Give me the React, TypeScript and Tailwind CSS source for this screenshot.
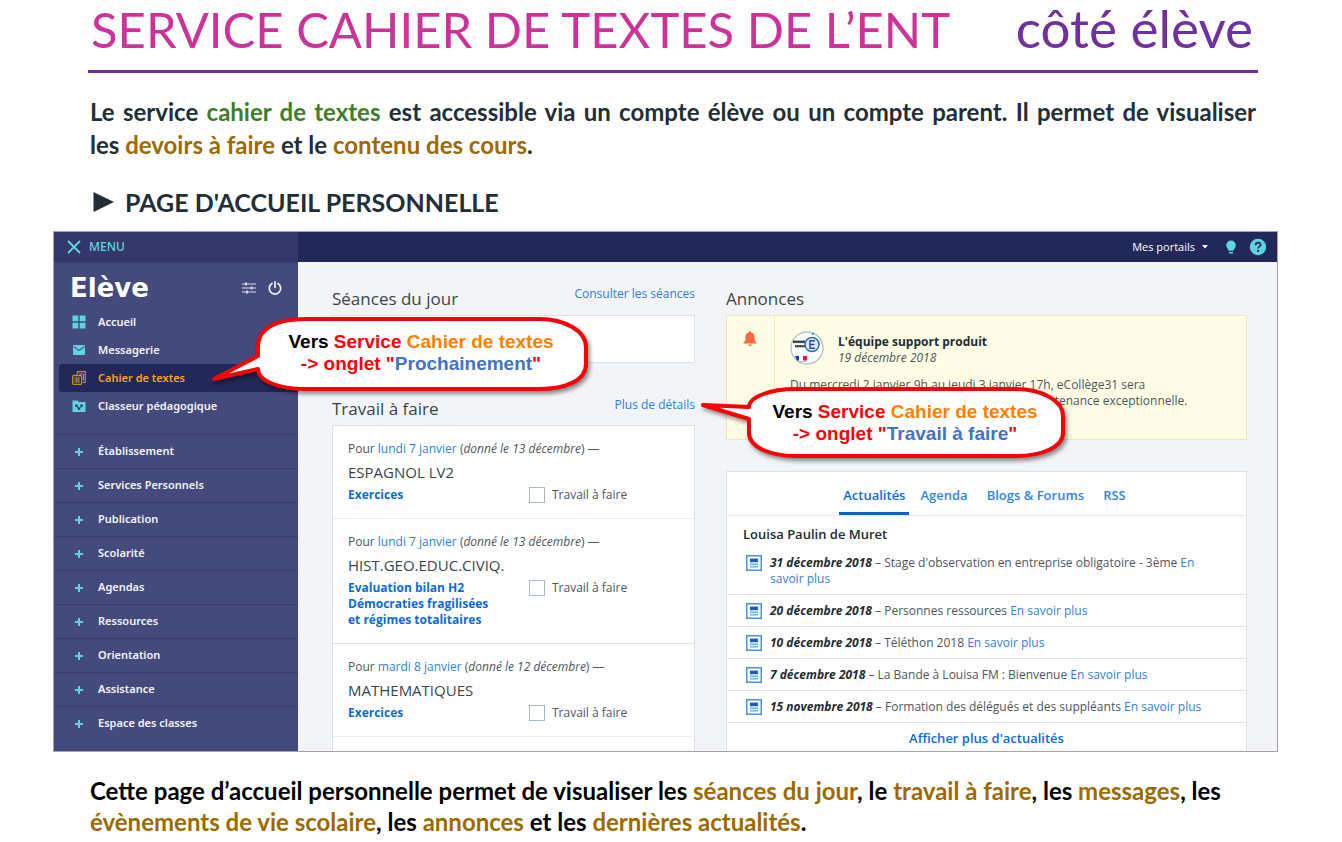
import React from "react";

const services = [
  "Établissement",
  "Services Personnels",
  "Publication",
  "Scolarité",
  "Agendas",
  "Ressources",
  "Orientation",
  "Assistance",
  "Espace des classes",
];

const homework = [
  { day: "lundi 7 janvier", given: "donné le 13 décembre", subject: "ESPAGNOL LV2", title: "Exercices", rule: "border-[#e9eef0]" },
  {
    day: "lundi 7 janvier",
    given: "donné le 13 décembre",
    subject: "HIST.GEO.EDUC.CIVIQ.",
    title: "Evaluation bilan H2 Démocraties fragilisées et régimes totalitaires",
    rule: "border-[#dae2e7]",
  },
  { day: "mardi 8 janvier", given: "donné le 12 décembre", subject: "MATHEMATIQUES", title: "Exercices", rule: "border-[#e9eef0]" },
];

const news = [
  { date: "31 décembre 2018", text: "Stage d'observation en entreprise obligatoire - 3ème" },
  { date: "20 décembre 2018", text: "Personnes ressources" },
  { date: "10 décembre 2018", text: "Téléthon 2018" },
  { date: "7 décembre 2018", text: "La Bande à Louisa FM : Bienvenue" },
  { date: "15 novembre 2018", text: "Formation des délégués et des suppléants" },
];

function GridIcon() {
  return (
    <svg viewBox="0 0 14 14" className="size-[14px]" fill="#5fd3e2" aria-hidden="true">
      <path d="M0.5 0.5h5.8v5.8h-5.8zM7.7 0.5h5.8v5.8h-5.8zM0.5 7.7h5.8v5.8h-5.8zM7.7 7.7h5.8v5.8h-5.8z" />
    </svg>
  );
}

function MailIcon() {
  return (
    <svg viewBox="0 0 14 14" className="size-[14px]" aria-hidden="true">
      <rect x="1" y="2" width="12" height="10" rx="1" fill="#5fd3e2" />
      <path d="M1.5 3.6L7 7.4l5.5-3.8" fill="none" stroke="#3c5f8c" strokeWidth="1.2" />
    </svg>
  );
}

function NotebookIcon() {
  return (
    <svg viewBox="0 0 14 14" className="size-[14px]" fill="none" stroke="#c58f26" aria-hidden="true">
      <path d="M5 3.5L5.5 0.7H13.3V11.5H11" strokeWidth="1.2" />
      <path d="M7 3h4.5v6.5" strokeWidth="1" />
      <rect x="0.7" y="4.5" width="9" height="8.8" rx="1" strokeWidth="1.3" />
      <path d="M2.3 7h5.8M2.3 9h5.8M2.3 11h5.8M4.2 6.5v5M6.3 6.5v5" strokeWidth="0.8" />
    </svg>
  );
}

function BinderIcon() {
  return (
    <svg viewBox="0 0 14 14" className="size-[14px]" aria-hidden="true">
      <path d="M0.5 1.5h5l1.2 1.5h6.8v10h-13z" fill="#5fd3e2" />
      <path d="M3.2 5.5h2.4v2.2H3.2zM8.4 5.5h2.4v2.2H8.4zM5.8 8.6h2.4v2.2H5.8z" fill="#1f3a60" />
      <path d="M4.4 7.5L7 9.5l2.6-2" fill="none" stroke="#1f3a60" />
    </svg>
  );
}

function NewsIcon() {
  return (
    <svg viewBox="0 0 16 16" className="size-4 shrink-0" aria-hidden="true">
      <rect x="0.75" y="0.75" width="14.5" height="14.5" fill="#fff" stroke="#4a92dc" strokeWidth="1.5" />
      <path d="M4 3.6h8v3.6H4z" fill="#0a63cc" />
      <path d="M4 9.2h8M4 11.7h8" stroke="#6fa9e4" strokeWidth="1.4" />
    </svg>
  );
}

function Avatar() {
  return (
    <svg viewBox="0 0 34 34" className="size-[34px] shrink-0" aria-hidden="true">
      <circle cx="17" cy="17" r="16" fill="#fff" stroke="#b3c3cc" strokeWidth="1.4" />
      <path d="M3 10.8h12" stroke="#5a5d63" strokeWidth="2.6" />
      <path d="M3 10.8h12" stroke="#2d3036" strokeWidth="1.6" strokeDasharray="1.6 0.9" />
      <path d="M5 15.2h10" stroke="#6a6d73" strokeWidth="2.4" />
      <path d="M5 15.2h10" stroke="#2d3036" strokeWidth="1.4" strokeDasharray="1.3 1" />
      <circle cx="22" cy="13.5" r="7" fill="#dce9f7" stroke="#2f6fc0" strokeWidth="1.6" />
      <path d="M25 9.8h-5v7.4h5M20 13.5h4.4" fill="none" stroke="#1d4f9c" strokeWidth="1.4" />
      <path d="M22 3.5l2-1.5" stroke="#2f6fc0" strokeWidth="1.4" />
      <path d="M5 25h4v4.5H7z" fill="#1f3f9a" />
      <path d="M13 25h4v4.5h-4z" fill="#e0202c" />
      <path d="M9 30.5h8" stroke="#aab" strokeWidth="0.8" />
    </svg>
  );
}

function Hot({ children }: { children: React.ReactNode }) {
  return <span className="text-[#9c6a00]">{children}</span>;
}

function Callout({ tab, place, path, box }: { tab: string; place: string; path: string; box: string }) {
  return (
    <div className={"absolute h-[92px] w-[392px] " + place}>
      <svg viewBox="0 0 392 92" className="absolute inset-0 size-full drop-shadow-[2px_3px_2px_rgba(0,0,0,0.45)]" aria-hidden="true">
        <path d={path} fill="#fff" stroke="#fb0007" strokeWidth="4" strokeLinejoin="round" />
      </svg>
      <p className={"relative pt-4 text-center font-['Liberation_Sans',sans-serif] text-[19px] leading-[22px] font-bold whitespace-nowrap text-[#fb0007] " + box}>
        <span className="text-black">Vers</span> Service <span className="text-[#ff8000]">Cahier de textes</span>
        <br />
        -&gt; onglet "<span className="text-[#4472c4]">{tab}</span>"
      </p>
    </div>
  );
}

function Sidebar() {
  const row = "flex h-7 items-center gap-3 pl-[13px]";
  return (
    <nav aria-label="Menu principal" className="w-[244px] shrink-0 bg-[#444a7c] font-['Noto_Sans',sans-serif] text-[11px] font-semibold text-[#f4f5fa]">
      <button type="button" className="flex h-[31px] w-full items-center gap-2 border-b border-[#3a3f70] bg-[#333869] pl-[13px] text-[12px] font-medium text-[#5fd3e2]">
        <svg viewBox="0 0 14 14" className="size-[14px]" stroke="#5fd3e2" strokeWidth="1.8" aria-hidden="true">
          <path d="M1 1l12 12M13 1L1 13" />
        </svg>
        MENU
      </button>
      <div className="flex h-[45px] items-center pt-1 pr-4 pl-4">
        <span className="flex-1 font-['DejaVu_Sans',sans-serif] text-[26px] leading-8 font-bold text-white">Elève</span>
        <button type="button" aria-label="Réglages" className="mr-3">
          <svg viewBox="0 0 14 12" className="h-3 w-[14px]" stroke="#dfe2f0" strokeWidth="1" fill="#dfe2f0" aria-hidden="true">
            <path d="M0 2h14M0 6h14M0 10h14" />
            <path d="M4 0.6v2.8M9.5 4.6v2.8M5 8.6v2.8" strokeWidth="1.8" />
          </svg>
        </button>
        <button type="button" aria-label="Déconnexion">
          <svg viewBox="0 0 14 14" className="size-[14px]" stroke="#f4f5fa" strokeWidth="1.7" fill="none" strokeLinecap="round" aria-hidden="true">
            <path d="M4 2.5a5.7 5.7 0 1 0 6 0M7 0.9v5.6" />
          </svg>
        </button>
      </div>
      <ul className="pl-[5px]">
        <li><a href="#accueil" className={row}><GridIcon />Accueil</a></li>
        <li><a href="#messagerie" className={row}><MailIcon />Messagerie</a></li>
        <li>
          <a href="#cahier" aria-current="page" className={row + " rounded-l-[3px] bg-[#222859] text-[#f9a61a]"}><NotebookIcon />Cahier de textes</a>
        </li>
        <li><a href="#classeur" className={row}><BinderIcon />Classeur pédagogique</a></li>
      </ul>
      <ul className="mt-[14px] pb-[11px]">
        {services.map((name) => (
          <li key={name} className="border-t border-[#373c6b]">
            <button type="button" className="flex h-[33px] w-full items-center gap-[14px] pl-5">
              <svg viewBox="0 0 10 10" className="size-[10px]" stroke="#5fd3e2" strokeWidth="2" aria-hidden="true">
                <path d="M5 1v8M1 5h8" />
              </svg>
              {name}
            </button>
          </li>
        ))}
      </ul>
    </nav>
  );
}

function Homework() {
  return (
    <section className="flex flex-1 flex-col">
      <div className="flex h-[53px] justify-between pt-6">
        <h3 className="pt-px text-[17px] leading-6 font-normal text-[#3b444b]">Séances du jour</h3>
        <a href="#seances" className="text-[12px] leading-4 text-[#2f7fd6]">Consulter les séances</a>
      </div>
      <div className="h-12 border border-[#dae2e7] bg-white" />
      <div className="flex h-[62px] justify-between pt-[34px]">
        <h3 className="text-[17px] leading-6 font-normal text-[#3b444b]">Travail à faire</h3>
        <a href="#details" className="text-[12px] leading-4 text-[#2f7fd6]">Plus de détails</a>
      </div>
      <ul className="flex-1 border-x border-t border-[#dae2e7] bg-white">
        {homework.map((h, i) => (
          <li key={h.subject} className={"border-b px-[15px] py-[15px] " + h.rule}>
            <p className="text-[12px] leading-4">
              Pour <a href="#jour" className="text-[#2f7fd6]">{h.day}</a> (<em>{h.given}</em>) —
            </p>
            <h4 className="mt-[3px] text-[15px] leading-6 text-[#3b444b]">{h.subject}</h4>
            <div className="mt-[3px] flex items-start">
              <div className="w-[181px] pr-7">
                <a href="#travail" className="block text-[12px] leading-4 font-bold text-[#0a6bd8]">{h.title}</a>
              </div>
              <input id={"fait-" + i} type="checkbox" className="size-4 appearance-none border border-[#a9bac4] bg-white" />
              <label htmlFor={"fait-" + i} className="pl-[7px] text-[12px] leading-4">Travail à faire</label>
            </div>
          </li>
        ))}
      </ul>
    </section>
  );
}

function Announcements() {
  return (
    <section className="flex w-[521px] flex-col">
      <h3 className="h-[53px] pt-[25px] text-[17px] leading-6 font-normal text-[#3b444b]">Annonces</h3>
      <article className="flex border border-[#ece6b8] bg-[#fffde5]">
        <div className="w-12 shrink-0 border-r border-[#ece6b8] pt-[15px] pl-4">
          <svg viewBox="0 0 14 16" className="h-4 w-[14px]" fill="#ff6a3c" aria-hidden="true">
            <path d="M7 0.3c.7 0 1.1.5 1.1 1.2C10.4 2 11.6 3.8 11.6 6v3.6L13.6 11.7V12.6H.4V11.7L2.4 9.6V6C2.4 3.8 3.6 2 5.9 1.5 5.9.8 6.3.3 7 .3zM5.3 13.5h3.4c0 1-.7 1.7-1.7 1.7s-1.7-.7-1.7-1.7z" />
          </svg>
        </div>
        <div className="px-[15px] pt-[15px] pb-[14px]">
          <div className="flex gap-[14px]">
            <Avatar />
            <p className="pt-[3px] text-[12px] leading-4">
              <strong className="text-[#232b31]">L'équipe support produit</strong>
              <br />
              <em>19 décembre 2018</em>
            </p>
          </div>
          <p className="mt-[11px] text-[12px] leading-4">
            Du mercredi 2 janvier 9h au jeudi 3 janvier 17h, eCollège31 sera
            <br />
            indisponible en raison d'une opération de maintenance exceptionnelle.
            <br />
            Le service sera rétabli dès le jeudi à partir de 17h.
          </p>
        </div>
      </article>
      <div className="mt-[31px] flex-1 border-x border-t border-[#dae2e7] bg-white text-[12px]">
        <div role="tablist" className="flex h-11 items-end justify-center gap-[3px] border-b border-[#e4ebee] text-[13px] font-semibold text-[#2f86dc]">
          <button type="button" role="tab" aria-selected="true" className="border-b-[3px] border-[#0a63cc] px-1 pb-[9px] leading-4 text-[#0a6bd8]">Actualités</button>
          <button type="button" role="tab" className="px-2 pb-3 leading-4">Agenda</button>
          <button type="button" role="tab" className="px-2 pb-3 leading-4">Blogs &amp; Forums</button>
          <button type="button" role="tab" className="px-2 pb-3 leading-4">RSS</button>
        </div>
        <h4 className="px-4 pt-[10px] pb-[5px] text-[13px] leading-4 font-semibold text-[#232b31]">Louisa Paulin de Muret</h4>
        <ul>
          {news.map((n) => (
            <li key={n.date} className="flex gap-2 border-b border-[#dae2e7] pt-2 pr-6 pb-[7px] pl-[19px] leading-4">
              <NewsIcon />
              <p>
                <strong className="text-[#232b31] italic">{n.date}</strong> – {n.text}{" "}
                <a href="#actualite" className="text-[#2f7fd6]">En savoir plus</a>
              </p>
            </li>
          ))}
        </ul>
        <a href="#actualites" className="block pt-[7px] text-center text-[13px] leading-4 font-semibold text-[#0a6bd8]">Afficher plus d'actualités</a>
      </div>
    </section>
  );
}

function Portal() {
  return (
    <div className="relative mr-16 ml-[53px] flex border border-[#a3a3a3] bg-[#f3f4f7] font-['Open_Sans',sans-serif] font-medium text-[#4c565e]">
      <Sidebar />
      <div className="flex flex-1 flex-col">
        <header className="flex h-[30px] items-center justify-end bg-[#222859] pr-[10px] text-[11px] font-normal text-white">
          <button type="button" className="flex items-center gap-[7px]">
            Mes portails
            <svg viewBox="0 0 6 4" className="h-1 w-[6px]" fill="#fff" aria-hidden="true"><path d="M0 0h6L3 3.5z" /></svg>
          </button>
          <button type="button" aria-label="Idées" className="ml-[17px]">
            <svg viewBox="0 0 12 14" className="h-[14px] w-3" fill="#5fd3e2" aria-hidden="true">
              <path d="M6 0.5a4.8 4.8 0 0 1 4.8 4.8c0 2-1.3 3-1.9 4.2-.3.6-.3 1-.3 1.2H3.4c0-.2 0-.6-.3-1.2C2.5 8.3 1.2 7.3 1.2 5.3A4.8 4.8 0 0 1 6 .5zM4 12h4v1.5H4z" />
            </svg>
          </button>
          <button type="button" aria-label="Aide" className="ml-3">
            <svg viewBox="0 0 18 18" className="size-[18px]" aria-hidden="true">
              <circle cx="9" cy="9" r="8.2" fill="#5fd3e2" />
              <path d="M6.6 7.2c0-1.6 1-2.6 2.5-2.6s2.5.9 2.5 2.2c0 1.8-2.5 1.9-2.5 3.6" fill="none" stroke="#222859" strokeWidth="1.7" />
              <circle cx="9.1" cy="12.9" r="1.1" fill="#222859" />
            </svg>
          </button>
        </header>
        <div className="flex flex-1 gap-[31px] pr-[30px] pl-[34px]">
          <Homework />
          <Announcements />
        </div>
      </div>
      <Callout
        tab="Prochainement"
        place="top-[83px] left-[155px]"
        box="pr-8 pl-16"
        path="M49 41V32C49 12 70 4 96 4H330C356 4 377 16 377 32V49C377 66 356 74 330 74H96C70 74 49 66 49 54L5 64Z"
      />
      <Callout
        tab="Travail à faire"
        place="top-[153px] left-[646px]"
        box="pr-[54px] pl-[72px]"
        path="M49 22C49 12 70 4 96 4H316C342 4 363 16 363 31V48C363 62 342 71 316 71H96C70 71 49 62 49 48V34L3 20Z"
      />
    </div>
  );
}

export default function App() {
  return (
    <main className="bg-white pb-2 font-['Lato',sans-serif] text-[24px] font-bold text-[#232f36]">
      <h1 className="mr-[84px] ml-[88px] flex h-[73px] items-baseline justify-between border-b-[3px] border-[#7030a0] px-[3px] text-[49px] leading-[56px] font-normal whitespace-nowrap">
        <span className="text-[#cc3399]">SERVICE CAHIER DE TEXTES DE L’ENT</span>
        <span className="pr-[2px] text-[53px] text-[#7030a0]">côté élève</span>
      </h1>
      <p className="mt-[22px] mr-[86px] ml-[90px] text-justify leading-[33px]">
        Le service <span className="text-[#3f7d2c]">cahier de textes</span> est accessible via un compte élève ou un compte parent. Il permet de visualiser
        les&nbsp;<Hot>devoirs à faire</Hot> et le <Hot>contenu des cours</Hot>.
      </p>
      <h2 className="mt-[27px] mr-[86px] mb-[15px] ml-[93px] flex h-[28px] items-center gap-[11px] text-[25px] leading-[28px]">
        <svg viewBox="0 0 21 20" className="h-5 w-[21px]" fill="#232f36" aria-hidden="true"><path d="M0.5 0L21 10L0.5 20Z" /></svg>
        PAGE D'ACCUEIL PERSONNELLE
      </h2>
      <Portal />
      <p className="mt-[23px] mr-[86px] ml-[90px] leading-[31px] text-black">
        Cette page d’accueil personnelle permet de visualiser les <Hot>séances du jour</Hot>, le <Hot>travail à faire</Hot>, les <Hot>messages</Hot>, les{" "}
        <Hot>évènements de vie scolaire</Hot>, les <Hot>annonces</Hot> et les <Hot>dernières actualités</Hot>.
      </p>
    </main>
  );
}
